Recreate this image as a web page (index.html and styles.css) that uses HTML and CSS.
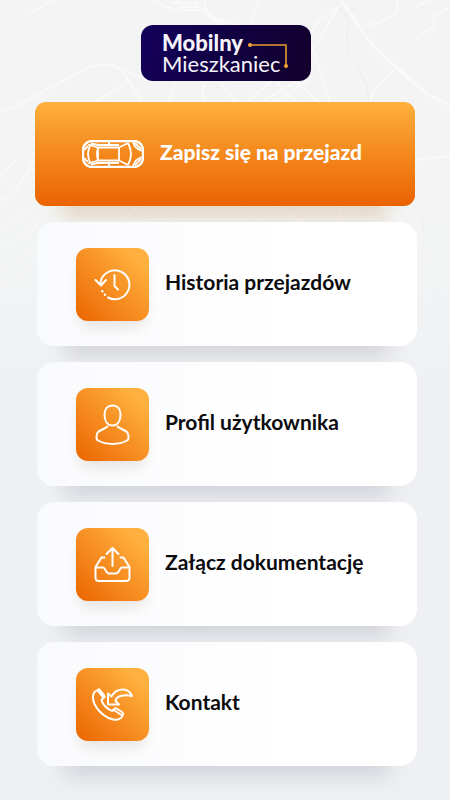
FILE: index.html
```html
<!DOCTYPE html>
<html lang="pl">
<head>
<meta charset="utf-8">
<meta name="viewport" content="width=device-width, initial-scale=1">
<title>Mobilny Mieszkaniec</title>
<link rel="stylesheet" href="styles.css">
</head>
<body>
<svg class="map" viewBox="0 0 450 400" preserveAspectRatio="xMidYMin slice" aria-hidden="true">
  <g fill="none" stroke="#f9f9f9" stroke-width="2" stroke-linecap="round">
    <path d="M31 13 75-14M155 0Q166 9 185 10L205 10Q208 18 220 24L248 34M172 3h24v-4M180 7h19M204 0Q205 14 216 19L240 26M260-2 247 31"/>
    <path d="M0 111Q12 109 25 101L86 69Q106 60 124 70L150 81M116 66Q130 78 140 101M95 102 131 80M168 102 178 77M205 102Q198 86 210 80M235 102 218 80M247 102 285 70M261 102 301 79M275 102 312 77M295 102 273 78M318 102 288 74M308 57 343 0M312 45 330 103"/>
    <path stroke-width="3" d="M335-8 358 25Q372 47 388 60L427 94 450 106"/>
    <path d="M343 3 320 20 300 44M365 25Q390 22 397 11V0M416 7 435-3M418 37 433 27 434 17 450 7M397 66 374 91 370 102M415 160 450 156M0 178 15 160M0 201Q16 193 23 179L35 160M0 250Q30 236 38 222M0 230 35 205M0 270 36 247M0 288 36 260M140 205 120 222M184 205 190 222M245 205 258 222M275 205 301 222M338 205 343 222M379 205 403 222"/>
  </g>
  <g fill="none" stroke="#ececec">
    <path d="M333 0 345 15Q352 20 347 32Q345 54 357 65L368 88V102M345 15 369 0M415 205Q426 220 424 247 441 286 446 335"/>
  </g>
</svg>
<main class="page">
  <h1 class="logo">
    <span class="logo-text"><strong>Mobilny</strong><span>Mieszkaniec</span></span>
    <svg class="logo-route" viewBox="0 0 42 34" aria-hidden="true">
      <path d="M2 9H38V30" fill="none" stroke="#e79a35" stroke-width="1.6"/>
      <circle cx="2" cy="9" r="2" fill="#f5a437"/><circle cx="38" cy="30" r="2" fill="#f5a437"/>
    </svg>
  </h1>
  <nav class="menu" aria-label="Menu główne">
    <a class="hero" href="#zapisz">
      <svg class="car" viewBox="0 0 62 28" aria-hidden="true">
        <g fill="none" stroke="#fff" stroke-width="1.8" stroke-linejoin="round">
          <rect x="1" y="1" width="60" height="26" rx="9" stroke-width="2.4"/>
          <path d="M16 7.500H37V20.500H16ZM37 7.500 46 3M37 20.500 46 25M46 3Q52 14 46 25M16 7.500 6 4.500M16 20.500 6 23.500M8 6Q4 14 8 22M16 7.500Q14 14 16 20.500M9 3.500 16 5H37M9 24.500 16 23H37M27 1V6M27 22V27M51 2Q53 9 60 11M51 26Q53 19 60 17M53 3 59 9M53 25 59 19M2 10 6 6M2 18 6 22"/>
        </g>
      </svg>
      <span class="label">Zapisz się na przejazd</span>
    </a>
    <a class="card" href="#historia">
      <span class="tile"><svg viewBox="0 0 73 73" aria-hidden="true">
        <path d="M24.500 35A14.500 14.500 0 1 1 32 49.500M38.500 27V38L42 41.500M19.500 32 25 37.500 30 32"/>
        <g class="dots"><circle cx="26.300" cy="43.300" r="1.200"/><circle cx="29" cy="46.700" r="1.200"/></g>
      </svg></span>
      <span class="label">Historia przejazdów</span>
    </a>
    <a class="card" href="#profil">
      <span class="tile"><svg viewBox="0 0 73 73" aria-hidden="true">
        <path d="M36.500 17.500C31.500 17.500 28.500 21 28.500 26.500C28.500 33 31.500 37.500 36.500 37.500S44.500 33 44.500 26.500C44.500 21 41.500 17.500 36.500 17.500ZM31.500 38.500C27.500 42.500 20.500 41.500 20.500 48.500C20.500 50.500 20 51.500 22 52.500C30 57 43 57 51 52.500C53 51.500 52.500 50.500 52.500 48.500C52.500 41.500 45.500 42.500 41.500 38.500"/>
      </svg></span>
      <span class="label">Profil użytkownika</span>
    </a>
    <a class="card" href="#dokumentacja">
      <span class="tile"><svg viewBox="0 0 73 73" aria-hidden="true">
        <path d="M36.500 38V20.500M30.500 26 36.500 20 42.500 26M28.500 29.500H25.500L19.500 39V49.500Q19.500 53 23 53H50Q53.500 53 53.500 49.500V39L47.500 29.500H44.500M19.500 39.500H27C30 39.500 29 45.500 33.500 45.500H39.500C44 45.500 43 39.500 46 39.500H53.500"/>
      </svg></span>
      <span class="label">Załącz dokumentację</span>
    </a>
    <a class="card" href="#kontakt">
      <span class="tile"><svg viewBox="0 0 73 73" aria-hidden="true">
        <path d="M22.500 21.500 18.500 24C14 31 20 41 27 46.500C33 51.500 42 54 46 49L47 46.500Q47.500 45 46 44L40.500 40.500Q39 40 38 41L36.500 43C32.500 42 26.500 37 25.500 32L28 29.500Q29 28.500 28 27L24 22Q23 21 22.500 21.500ZM22.500 23.500 27.500 29.500M38.500 42.500 45.500 47M32 25.500V36.500H43L39.500 33C40 28.500 47 26 56 28C52 18.500 40 20 35.500 28.500Z"/>
      </svg></span>
      <span class="label">Kontakt</span>
    </a>
  </nav>
</main>
</body>
</html>
```
FILE: styles.css
```css
* {
  box-sizing: border-box;
}

body {
  margin: 0;
  min-height: 100vh;
  background: linear-gradient(#f4f4f4 0, #f3f4f4 240px, #eff0f3 400px);
  color: #0c0c0f;
  font-family: Lato, "Open Sans", sans-serif;
}

.map {
  position: absolute;
  top: 0;
  left: 0;
  z-index: -1;
  width: 100%;
  height: 400px;
  -webkit-mask-image: linear-gradient(#000 40%, transparent 85%);
  mask-image: linear-gradient(#000 40%, transparent 85%);
}

.page {
  display: flex;
  flex-direction: column;
  align-items: center;
  gap: 21px;
  padding: 25px 33px 34px 35px;
}

.logo {
  display: flex;
  align-items: center;
  width: 170px;
  height: 56px;
  margin: 0;
  padding-left: 21px;
  border-radius: 12px;
  background: linear-gradient(110deg, #14005c, #11003f 55%, #13002c);
  color: #f5f4fa;
  font-size: 22px;
  font-weight: 400;
  line-height: 21px;
}

.logo-text {
  display: flex;
  flex-direction: column;
}

.logo strong {
  font-weight: 900;
}

.logo-route {
  flex: none;
  width: 42px;
  height: 34px;
  margin-left: -32px;
}

.menu {
  display: flex;
  flex-direction: column;
  gap: 16px;
  width: 100%;
}

.hero,
.card {
  position: relative;
  display: flex;
  align-items: center;
  gap: 16px;
  color: inherit;
  font-size: 21px;
  font-weight: 700;
  line-height: 24px;
  text-decoration: none;
}

.label {
  padding-bottom: 4px;
}

.hero {
  height: 104px;
  margin-right: 2px;
  padding-left: 47px;
  border-radius: 11px;
  background: linear-gradient(#ffb03d, #f58c20 45%, #ea6300);
  box-shadow: 0 40px 20px -28px #ad6b1c38;
  color: #fff;
  font-weight: 900;
}

.car {
  flex: none;
  width: 62px;
  height: 28px;
}

.card {
  min-height: 124px;
  margin-left: 2px;
  padding: 25px 39px;
  border-radius: 17px;
  background: linear-gradient(90deg, #f9fafd, #fff 65%);
  box-shadow: 0 38px 20px -28px #5c607833;
}

.tile {
  flex: none;
  width: 73px;
  height: 73px;
  border-radius: 12px;
  background: linear-gradient(45deg, #eb6500, #f68c20 45%, #ffb03e 85%);
  box-shadow: 0 10px 14px -4px #9b846533;
}

.tile svg {
  display: block;
  width: 100%;
  fill: none;
  stroke: #fff;
  stroke-width: 2;
  stroke-linecap: round;
  stroke-linejoin: round;
}

.tile .dots {
  fill: #fff;
  stroke: none;
}
```
